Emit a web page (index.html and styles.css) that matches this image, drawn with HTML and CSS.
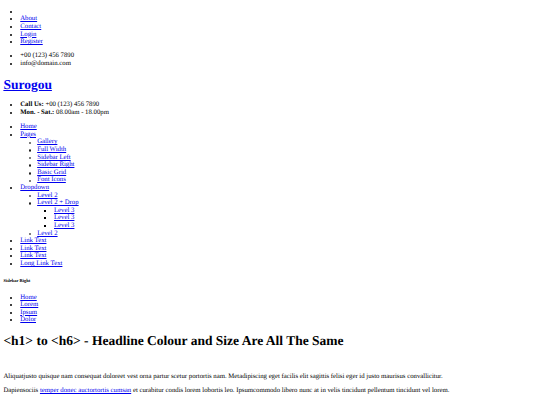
FILE: index.html
```html
<!DOCTYPE html>
<html>
<head>
<meta charset="utf-8">
<title>Surogou</title>
<link rel="stylesheet" href="styles.css">
</head>
<body class="site">
<ul class="list top-list">
  <li></li>
  <li><a href="#">About</a></li>
  <li><a href="#">Contact</a></li>
  <li><a href="#">Login</a></li>
  <li><a href="#">Register</a></li>
</ul>
<ul class="list">
  <li>+00 (123) 456 7890</li>
  <li>info@domain.com</li>
</ul>
<h1 class="heading"><a href="#">Surogou</a></h1>
<ul class="list">
  <li><strong>Call Us:</strong> +00 (123) 456 7890</li>
  <li><strong>Mon. - Sat.:</strong> 08.00am - 18.00pm</li>
</ul>
<ul class="list">
  <li><a href="#">Home</a></li>
  <li><a href="#">Pages</a>
    <ul class="sub sub-circle">
      <li><a href="#">Gallery</a></li>
      <li><a href="#">Full Width</a></li>
      <li><a href="#">Sidebar Left</a></li>
      <li><a href="#">Sidebar Right</a></li>
      <li><a href="#">Basic Grid</a></li>
      <li><a href="#">Font Icons</a></li>
    </ul>
  </li>
  <li><a href="#">Dropdown</a>
    <ul class="sub sub-circle">
      <li><a href="#">Level 2</a></li>
      <li><a href="#">Level 2 + Drop</a>
        <ul class="sub sub-square">
          <li><a href="#">Level 3</a></li>
          <li><a href="#">Level 3</a></li>
          <li><a href="#">Level 3</a></li>
        </ul>
      </li>
      <li><a href="#">Level 2</a></li>
    </ul>
  </li>
  <li><a href="#">Link Text</a></li>
  <li><a href="#">Link Text</a></li>
  <li><a href="#">Link Text</a></li>
  <li><a href="#">Long Link Text</a></li>
</ul>
<h6 class="small-heading">Sidebar Right</h6>
<ul class="list">
  <li><a href="#">Home</a></li>
  <li><a href="#">Lorem</a></li>
  <li><a href="#">Ipsum</a></li>
  <li><a href="#">Dolor</a></li>
</ul>
<h1 class="heading headline">&lt;h1&gt; to &lt;h6&gt; - Headline Colour and Size Are All The Same</h1>
<p class="text">Aliquatjusto quisque nam consequat doloreet vest orna partur scetur portortis nam. Metadipiscing eget facilis elit sagittis felisi eger id justo maurisus convallicitur.</p>
<p class="text">Dapiensociis <a href="#">temper donec auctortortis cumsan</a> et curabitur condis lorem lobortis leo. Ipsumcommodo libero nunc at in velis tincidunt pellentum tincidunt vel lorem.</p>
</body>
</html>
```

FILE: styles.css
```css
.site {
  margin: 3.375px;
  font-family: "Liberation Serif", "Times New Roman", serif;
  font-size: 6.75px;
  line-height: 7.594px;
  color: #000;
  text-rendering: geometricPrecision;
}
.site a {
  color: #0000ee;
}
.list {
  margin: 6.75px 0;
  padding-left: 16.875px;
  list-style: disc;
}
.top-list {
  margin-top: 4.4px;
}
.sub {
  margin: 0;
  padding-left: 16.875px;
}
.sub-circle {
  list-style: none;
}
.sub-circle > li {
  position: relative;
}
.sub-circle > li::before {
  content: "";
  position: absolute;
  left: -8.3px;
  top: 3.1px;
  width: 2.6px;
  height: 2.6px;
  box-sizing: border-box;
  border: 0.6px solid #222;
  border-radius: 50%;
}
.sub-square {
  list-style: square;
}
.heading {
  font-size: 13.5px;
  line-height: 15.6px;
  margin: 9.05px 0;
  font-weight: bold;
}
.headline {
  margin-bottom: 23.9px;
}
.small-heading {
  font-size: 4.52px;
  line-height: 5.06px;
  margin: 10.54px 0;
  font-weight: bold;
}
.text {
  margin: 6.75px 0;
}
```
